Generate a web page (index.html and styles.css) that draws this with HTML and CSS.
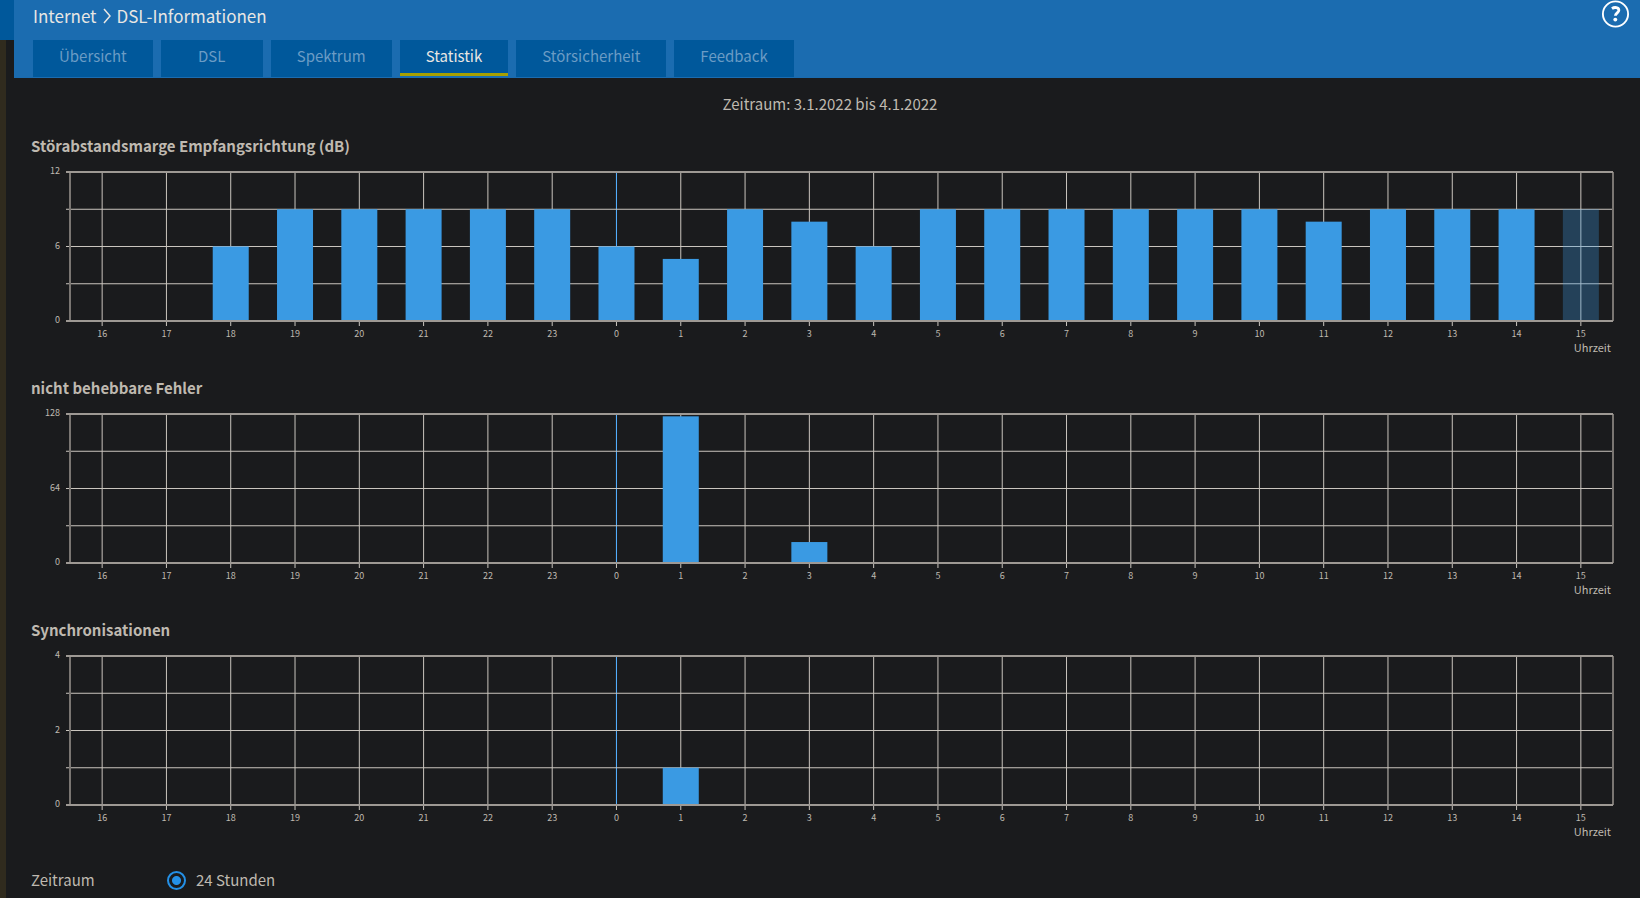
FILE: index.html
```
<!DOCTYPE html>
<html lang="de">
<head>
    <meta charset="UTF-8">
    <meta name="viewport" content="width=device-width, initial-scale=1.0">
    <title>DSL-Informationen</title>
    <link rel="stylesheet" href="styles.css">
</head>
<body>
    <aside class="sidebar"></aside>
    <div class="page">
        <header>
            <div class="title-bar">
                <nav class="breadcrumb">
                    <a href="#internet">Internet</a>
                    <svg class="chevron" viewBox="0 0 8 16"><path d="M1 1l6 7-6 7"/></svg>
                    <a href="#dsl-info">DSL-Informationen</a>
                </nav>
                <button class="help" type="button" aria-label="Hilfe">
                    <svg viewBox="0 0 30 30">
                        <circle class="ring" cx="15" cy="15" r="13.5"/>
                        <path class="hook" d="M11.2 9.2c2.8-2 7.4-1.4 7.4 1.8 0 2.7-3.7 3-3.7 6"/>
                        <circle class="dot" cx="14.8" cy="21" r="2.1"/>
                    </svg>
                </button>
            </div>
            <nav class="tabs">
                <a href="#uebersicht">Übersicht</a>
                <a href="#dsl">DSL</a>
                <a href="#spektrum">Spektrum</a>
                <a href="#statistik" class="active">Statistik</a>
                <a href="#stoersicherheit">Störsicherheit</a>
                <a href="#feedback">Feedback</a>
            </nav>
        </header>
        <main>
            <p class="period">Zeitraum: 3.1.2022 bis 4.1.2022</p>

            <section class="chart">
                <h2>Störabstandsmarge Empfangsrichtung (dB)</h2>
                <svg class="plot" id="margin"></svg>
                <p class="unit">Uhrzeit</p>
            </section>

            <section class="chart">
                <h2>nicht behebbare Fehler</h2>
                <svg class="plot" id="errors"></svg>
                <p class="unit">Uhrzeit</p>
            </section>

            <section class="chart">
                <h2>Synchronisationen</h2>
                <svg class="plot" id="syncs"></svg>
                <p class="unit">Uhrzeit</p>
            </section>

            <form class="range">
                <span class="range-label">Zeitraum</span>
                <input type="radio" name="range" id="range-24h" checked>
                <label for="range-24h">24 Stunden</label>
            </form>
        </main>
    </div>
    <script src="charts.js"></script>
</body>
</html>
```

FILE: styles.css
```
:root {
    --header-color: #1b6cb0;
    --tab-color: #00589b;
    --tab-text: #6b9cc5;
    --active-line: #a8a000;
    --bg-color: #1a1b1d;
    --text-color: #bfb9b0;
    --grid-color: #cac5be;
    --bar-color: #3a9ae3;
    --midnight-color: #4fadff;
    --radio-color: #2490e6;
}
* {
    box-sizing: border-box;
}
body {
    display: flex;
    min-height: 100vh;
    margin: 0;
    font-family: "Noto Sans CJK JP", "Noto Sans", sans-serif;
    font-size: 15px;
    line-height: 24px;
    color: var(--text-color);
    background: var(--bg-color);
}
a {
    color: inherit;
    text-decoration: none;
}
h2, p {
    margin: 0;
}

/* Strip of the main menu left of the page */
.sidebar {
    flex: 0 0 14px;
    border-left: 6px solid #302b1e;
}
.sidebar::before {
    content: "";
    display: block;
    height: 40px;
    margin-left: -6px;
    background: var(--tab-color);
}
.page {
    flex: 1;
    min-width: 0;
}

header {
    height: 78px;
    padding: 0 10px 0 19px;
    background: var(--header-color);
}
.title-bar {
    display: flex;
    justify-content: space-between;
    height: 40px;
}
.breadcrumb {
    display: flex;
    align-items: center;
    gap: 6px;
    height: 32px;
    font-size: 17px;
    color: #e8e6e3;
}
.chevron {
    width: 8px;
    height: 16px;
    fill: none;
    stroke: currentColor;
    stroke-width: 1.5;
}
.help {
    width: 29px;
    height: 28px;
    padding: 0;
    border: none;
    background: none;
    cursor: pointer;
}
.help svg {
    display: block;
    width: 100%;
    height: 100%;
}
.ring, .hook {
    fill: none;
    stroke: #fff;
    stroke-width: 2;
}
.hook {
    stroke-width: 3;
}
.dot {
    fill: #fff;
}

.tabs {
    display: flex;
    gap: 8px;
}
.tabs a {
    min-width: 102px;
    height: 37px;
    padding: 4px 26px 0;
    text-align: center;
    color: var(--tab-text);
    background: var(--tab-color);
}
.tabs .active {
    height: 36px;
    color: #e8e6e3;
    border-bottom: 3px solid var(--active-line);
}

main {
    padding: 14px 27px 0 17px;
}
.period {
    margin-bottom: 18px;
    padding-left: 16px;
    text-align: center;
}
.chart {
    height: 242px;
}
.chart h2 {
    font-size: 15px;
    line-height: 24px;
    font-weight: bold;
}
.plot {
    display: block;
    width: calc(100% - 39px);
    height: 149px;
    margin: 14px 0 0 39px;
    overflow: visible;
}
.plot line {
    stroke: var(--grid-color);
    stroke-width: 1;
}
.plot .midnight {
    stroke: var(--midnight-color);
}
.plot .edge {
    stroke: #9e9994;
    stroke-width: 2;
}
.plot .side {
    stroke: #7a7672;
    stroke-width: 2;
}
.plot rect {
    fill: var(--bar-color);
}
.plot .running {
    fill-opacity: 0.3;
}
.plot text {
    font-size: 9px;
    fill: var(--text-color);
}
.plot .hour {
    text-anchor: middle;
}
.plot .value {
    text-anchor: end;
}
.unit {
    margin-top: 18px;
    padding-right: 2px;
    font-size: 11px;
    line-height: 16px;
    text-align: right;
}

.range {
    display: flex;
    align-items: center;
    padding: 8px 0 6px;
}
.range-label {
    width: 136px;
}
.range input {
    appearance: none;
    width: 19px;
    height: 19px;
    margin: 0 10px 0 0;
    border: 2px solid var(--radio-color);
    border-radius: 50%;
    background: radial-gradient(circle, var(--radio-color) 4px, transparent 5px);
}
```

FILE: charts.js
```
const SVG_NS = 'http://www.w3.org/2000/svg';
const HOURS = 24;
const FIRST_HOUR = 16;
const HEIGHT = 149;
const BAR = 0.56; // part of an hour column that the bar fills

function add(svg, name, attrs, text) {
    const el = document.createElementNS(SVG_NS, name);
    for (const key in attrs) {
        el.setAttribute(key, attrs[key]);
    }
    if (text !== undefined) {
        el.textContent = text;
    }
    svg.appendChild(el);
}

function percent(column) {
    return (column / HOURS * 100) + '%';
}

// values: hour of the day -> value, running: hour that is not over yet
function drawChart(id, max, values, running) {
    const svg = document.getElementById(id);

    for (let i = 0; i < HOURS; i++) {
        const x = percent(i + 0.5);
        const hour = (FIRST_HOUR + i) % 24;
        add(svg, 'line', { x1: x, x2: x, y1: 0, y2: HEIGHT + 5 });
        if (hour === 0) {
            add(svg, 'line', { x1: x, x2: x, y1: 0, y2: HEIGHT, class: 'midnight' });
        }
        add(svg, 'text', { x: x, y: HEIGHT + 16, class: 'hour' }, hour);
    }
    for (let i = 1; i < 4; i++) {
        const y = HEIGHT * i / 4;
        add(svg, 'line', { x1: -4, x2: '100%', y1: y, y2: y });
    }
    for (let i = 0; i < HOURS; i++) {
        const hour = (FIRST_HOUR + i) % 24;
        const height = (values[hour] || 0) / max * HEIGHT;
        if (height > 0) {
            add(svg, 'rect', {
                x: percent(i + 0.5 - BAR / 2),
                y: HEIGHT - height,
                width: percent(BAR),
                height: height,
                class: hour === running ? 'running' : 'done'
            });
        }
    }
    add(svg, 'line', { x1: 0, x2: 0, y1: 0, y2: HEIGHT, class: 'side' });
    add(svg, 'line', { x1: '100%', x2: '100%', y1: 0, y2: HEIGHT, class: 'side' });
    add(svg, 'line', { x1: -4, x2: '100%', y1: 0, y2: 0, class: 'edge' });
    add(svg, 'line', { x1: -4, x2: '100%', y1: HEIGHT, y2: HEIGHT, class: 'edge' });

    add(svg, 'text', { x: -10, y: 2, class: 'value' }, max);
    add(svg, 'text', { x: -10, y: HEIGHT / 2 + 2, class: 'value' }, max / 2);
    add(svg, 'text', { x: -10, y: HEIGHT + 2, class: 'value' }, 0);
}

drawChart('margin', 12, {
    18: 6, 19: 9, 20: 9, 21: 9, 22: 9, 23: 9, 0: 6, 1: 5, 2: 9, 3: 8, 4: 6, 5: 9,
    6: 9, 7: 9, 8: 9, 9: 9, 10: 9, 11: 8, 12: 9, 13: 9, 14: 9, 15: 9
}, 15);
drawChart('errors', 128, { 1: 126, 3: 18 });
drawChart('syncs', 4, { 1: 1 });
```
